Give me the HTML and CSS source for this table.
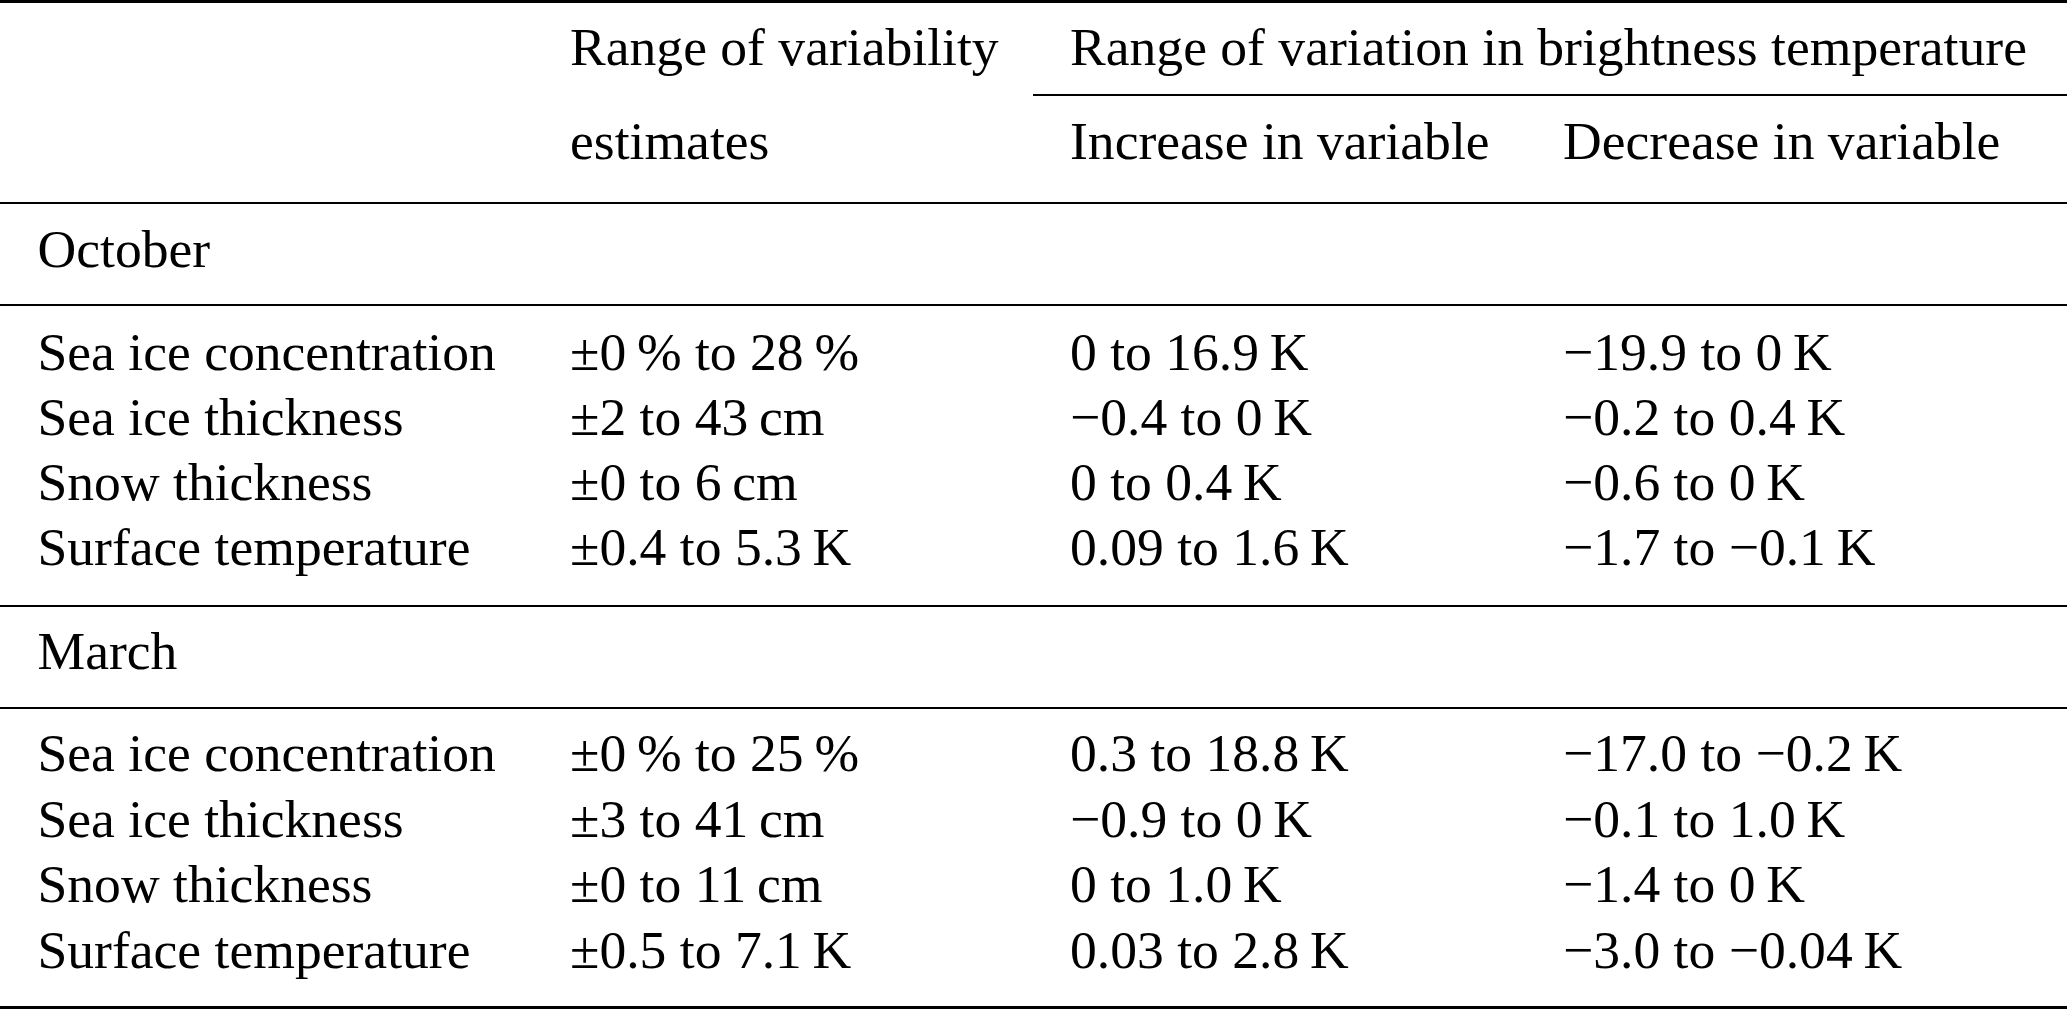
FILE: index.html
```html
<!DOCTYPE html>
<html lang="en">
<head>
<meta charset="utf-8">
<title>Brightness temperature variability</title>
<link rel="stylesheet" href="styles.css">
</head>
<body>
<table class="tbl">
  <colgroup>
    <col class="c1">
    <col class="c2">
    <col class="c3">
    <col class="c4">
  </colgroup>
  <thead>
    <tr class="h1">
      <td></td>
      <td>Range of variability</td>
      <td colspan="2" class="cmid">Range of variation in brightness temperature</td>
    </tr>
    <tr class="h2">
      <td></td>
      <td>estimates</td>
      <td>Increase in variable</td>
      <td>Decrease in variable</td>
    </tr>
  </thead>
  <tbody class="s1">
    <tr class="group">
      <td colspan="4">October</td>
    </tr>
    <tr class="first">
      <td>Sea ice concentration</td>
      <td>±0&thinsp;% to 28&thinsp;%</td>
      <td>0 to 16.9&thinsp;K</td>
      <td>−19.9 to 0&thinsp;K</td>
    </tr>
    <tr>
      <td>Sea ice thickness</td>
      <td>±2 to 43&thinsp;cm</td>
      <td>−0.4 to 0&thinsp;K</td>
      <td>−0.2 to 0.4&thinsp;K</td>
    </tr>
    <tr>
      <td>Snow thickness</td>
      <td>±0 to 6&thinsp;cm</td>
      <td>0 to 0.4&thinsp;K</td>
      <td>−0.6 to 0&thinsp;K</td>
    </tr>
    <tr class="last">
      <td>Surface temperature</td>
      <td>±0.4 to 5.3&thinsp;K</td>
      <td>0.09 to 1.6&thinsp;K</td>
      <td>−1.7 to −0.1&thinsp;K</td>
    </tr>
  </tbody>
  <tbody class="s2">
    <tr class="group">
      <td colspan="4">March</td>
    </tr>
    <tr class="first">
      <td>Sea ice concentration</td>
      <td>±0&thinsp;% to 25&thinsp;%</td>
      <td>0.3 to 18.8&thinsp;K</td>
      <td>−17.0 to −0.2&thinsp;K</td>
    </tr>
    <tr>
      <td>Sea ice thickness</td>
      <td>±3 to 41&thinsp;cm</td>
      <td>−0.9 to 0&thinsp;K</td>
      <td>−0.1 to 1.0&thinsp;K</td>
    </tr>
    <tr>
      <td>Snow thickness</td>
      <td>±0 to 11&thinsp;cm</td>
      <td>0 to 1.0&thinsp;K</td>
      <td>−1.4 to 0&thinsp;K</td>
    </tr>
    <tr class="last">
      <td>Surface temperature</td>
      <td>±0.5 to 7.1&thinsp;K</td>
      <td>0.03 to 2.8&thinsp;K</td>
      <td>−3.0 to −0.04&thinsp;K</td>
    </tr>
  </tbody>
</table>
</body>
</html>
```
FILE: styles.css
```css
html, body {
  margin: 0;
  padding: 0;
  background: #ffffff;
  overflow: hidden;
}

.tbl {
  width: 2067px;
  table-layout: fixed;
  border-collapse: separate;
  border-spacing: 0;
  font-family: "Liberation Serif", "Times New Roman", serif;
  font-size: 53.6px;
  color: #000000;
}

.c1 { width: 532.5px; }
.c2 { width: 500px; }
.c3 { width: 493px; }
.c4 { width: 541.5px; }

.tbl td {
  padding: 0 37.5px;
  line-height: 65px;
  white-space: nowrap;
  vertical-align: top;
  text-align: left;
}

/* header */
.tbl .h1 td {
  border-top: 3px solid #000;
  padding-top: 12px;
  padding-bottom: 16px;
}
.tbl .h1 td.cmid {
  padding-bottom: 14px;
  border-bottom: 2px solid #000;
}
.tbl .h2 td {
  padding-top: 13px;
  padding-bottom: 28px;
  border-bottom: 2px solid #000;
}

/* group labels */
.tbl .group td {
  padding-top: 13px;
  padding-bottom: 22px;
  border-bottom: 2px solid #000;
}
.tbl .s2 .group td {
  padding-top: 12px;
  padding-bottom: 23px;
}

/* data rows */
.tbl .first td {
  padding-top: 14px;
}
.tbl .last td {
  padding-bottom: 25px;
  border-bottom: 2px solid #000;
}

.tbl .s2 td {
  line-height: 65.5px;
}
.tbl .s2 .group td {
  line-height: 65px;
}
.tbl .s2 .first td {
  padding-top: 12px;
}
.tbl .s2 .last td {
  padding-bottom: 23px;
  border-bottom: 3px solid #000;
}
```
